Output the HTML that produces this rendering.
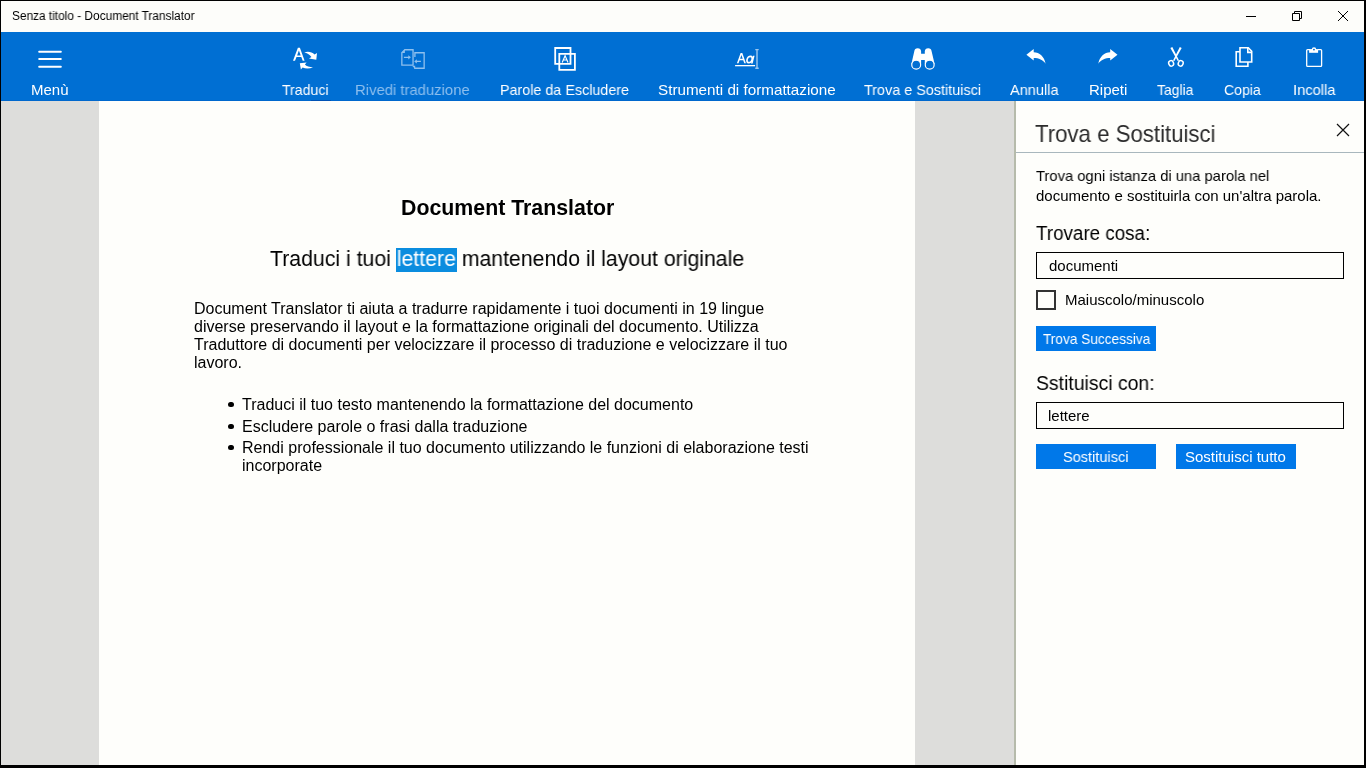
<!DOCTYPE html>
<html><head><meta charset="utf-8">
<style>
html,body{margin:0;padding:0;}
body{width:1366px;height:768px;overflow:hidden;background:#000;position:relative;font-family:"Liberation Sans",sans-serif;}
.a{position:absolute;}
.t{position:absolute;white-space:nowrap;line-height:1;transform-origin:0 0;will-change:transform;}
#title{left:1px;top:1px;width:1363px;height:31px;background:#fdfdfa;}
#tb{left:1px;top:32px;width:1363px;height:69px;background:#006fd3;}
#gl{left:1px;top:101px;width:98px;height:664px;background:#dddddb;}
#pg{left:99px;top:101px;width:816px;height:664px;background:#fefefb;}
#gr{left:915px;top:101px;width:99px;height:664px;background:#dddddb;}
#bd{left:1014px;top:101px;width:2px;height:664px;background:#b6bbab;}
#pn{left:1016px;top:101px;width:348px;height:664px;background:#fefefb;}
.lbl{color:#fff;font-size:15px;}
.dis{color:#8dbfee;}
.doc{color:#000;font-size:16px;}
.ui{color:#000;}
.btn{background:#0078e9;}
.fld{border:1px solid #000;box-sizing:border-box;background:#fefefb;}
</style></head><body>
<div id="title" class="a"></div>
<div class="t" style="left:12px;top:10px;font-size:12px;color:#000;transform:scaleX(0.988);">Senza titolo - Document Translator</div>
<!-- window buttons -->
<svg class="a" style="left:1236px;top:4px" width="120" height="24" viewBox="1236 4 120 24">
 <path d="M1246 16.5H1256" stroke="#000" stroke-width="1" fill="none"/>
 <path d="M1292.5 13.5h7v7h-7z M1294.5 13.5v-2h7v7h-2" stroke="#000" stroke-width="1" fill="none"/>
 <path d="M1338 11L1348 21M1348 11L1338 21" stroke="#000" stroke-width="1" fill="none"/>
</svg>

<div id="tb" class="a"></div>
<div class="a" style="left:1px;top:100px;width:1363px;height:1px;background:#0068cd;"></div>
<div class="a" style="left:311px;top:100px;width:20px;height:1px;background:#0052b4;"></div>
<div id="gl" class="a"></div>
<div id="pg" class="a"></div>
<div id="gr" class="a"></div>
<div id="bd" class="a"></div>
<div id="pn" class="a"></div>

<!-- toolbar labels -->
<div class="t lbl" style="left:31px;top:82.3px;">Menù</div>
<div class="t lbl" style="left:282px;top:82.3px;transform:scaleX(0.94);">Traduci</div>
<div class="t lbl dis" style="left:355px;top:82.3px;transform:scaleX(0.99);">Rivedi traduzione</div>
<div class="t lbl" style="left:500px;top:82.3px;transform:scaleX(0.955);">Parole da Escludere</div>
<div class="t lbl" style="left:658px;top:82.3px;transform:scaleX(1.015);">Strumenti di formattazione</div>
<div class="t lbl" style="left:864px;top:82.3px;transform:scaleX(0.959);">Trova e Sostituisci</div>
<div class="t lbl" style="left:1010px;top:82.3px;transform:scaleX(0.97);">Annulla</div>
<div class="t lbl" style="left:1089px;top:82.3px;">Ripeti</div>
<div class="t lbl" style="left:1157px;top:82.3px;transform:scaleX(0.93);">Taglia</div>
<div class="t lbl" style="left:1224px;top:82.3px;transform:scaleX(0.94);">Copia</div>
<div class="t lbl" style="left:1293px;top:82.3px;transform:scaleX(0.98);">Incolla</div>
<svg class="a" style="left:0;top:0" width="1366" height="101" viewBox="0 0 1366 101">
 <g fill="#fff">
  <!-- hamburger -->
  <rect x="38.2" y="50.75" width="23.6" height="1.9" rx="0.9"/>
  <rect x="38.2" y="58.05" width="23.6" height="1.9" rx="0.9"/>
  <rect x="38.2" y="65.8" width="23.6" height="1.9" rx="0.9"/>
 </g>
 <!-- translate -->
 <path fill="#fff" fill-rule="evenodd" d="M293 60.8 L297.9 47.8 H299.9 L304.6 60.8 H302.7 L301.3 56.9 H296.5 L295 60.8 Z M297.1 55.5 H300.7 L298.9 50.4 Z"/>
 <path fill="#fff" d="M304.2 52.5 C307.5 51 311.8 51.6 314.6 54.6 L317 52.9 L316.3 59.8 L309 58.6 L311.4 56.9 C309.6 54.6 307 53.1 304.2 52.5 Z"/>
 <path fill="#fff" d="M299.8 63.25 L306.6 62.4 L304.9 64.5 C306.5 66.3 309.5 67.2 313 67.3 C309.8 68.8 305.5 69 302.6 67.4 L300.9 69.5 Z"/>
 <!-- rivedi -->
 <g stroke="#8ec0ee" stroke-width="1.3" fill="none">
  <path d="M401.85 52.6 L404.8 49.75 H413.05 V65.05 H401.85 Z"/>
  <path d="M414.9 57 V52.75 H424.15 V68.25 H414.2"/>
  <path d="M403.9 57.3 H409.2 M420.9 61.4 H416"/>
 </g>
 <g fill="#8ec0ee">
  <path d="M401.5 52.9 L404.9 49.4 V52.9 Z"/>
  <path d="M408.3 55.2 L410.9 57.3 L408.3 59.4 Z"/>
  <path d="M416.8 59.3 L414.2 61.4 L416.8 63.5 Z"/>
  <path d="M412.1 65.7 H415.2 V68.9 Z"/>
 </g>
 <!-- parole -->
 <g stroke="#fff" stroke-width="1.8" fill="none">
  <path d="M555.2 48 H570.5 V63.9 H555.2 Z"/>
  <path d="M559.3 53.9 H574.9 V69.9 H559.3 Z"/>
 </g>
 <path d="M562.2 62.4 L565.1 55.8 L568 62.4 M563.2 60 H567" stroke="#fff" stroke-width="1.15" fill="none"/>
 <!-- strumenti -->
 <path fill="#fff" fill-rule="evenodd" d="M736.9 63.2 L740.6 53 H742.3 L745.9 63.2 H744.3 L743.2 60.2 H739.6 L738.5 63.2 Z M740.1 58.8 H742.7 L741.4 55 Z"/>
 <g transform="translate(749.6 59.6) skewX(-14)"><ellipse rx="2.55" ry="3.2" stroke="#fff" stroke-width="1.6" fill="none"/><path d="M3.2 -3.9 V4" stroke="#fff" stroke-width="1.6"/></g>
 <rect x="735.1" y="65" width="20" height="1.3" fill="#fff"/>
 <path d="M757 49.6 V68.2 M755.3 49.6 H758.7 M755.3 68.2 H758.7" stroke="#9cc8f0" stroke-width="1.4" fill="none"/>
 <!-- binoculars -->
 <path fill="#fff" d="M911.4 64 L914.3 51.2 Q914.6 48.2 917.7 48.2 Q920.8 48.2 921.1 51.2 V53.7 H924.8 V51.2 Q925.1 48.2 928.2 48.2 Q931.3 48.2 931.6 51.2 L934.6 64 H924.8 V60 H921.1 V64 Z"/>
 <circle cx="916.2" cy="64.7" r="4.45" fill="#006fd3" stroke="#fff" stroke-width="1.2"/>
 <circle cx="929.7" cy="64.7" r="4.45" fill="#006fd3" stroke="#fff" stroke-width="1.2"/>
 <!-- undo / redo -->
 <path fill="#fff" d="M1026.4 54.8 L1033.7 49.1 V52.3 C1039.5 52.5 1044.2 56.5 1045.6 63.7 C1043 59.8 1038.8 58 1033.7 58 V60.6 Z"/>
 <path fill="#fff" d="M1117.5 54.8 L1110.2 49.1 V52.3 C1104.4 52.5 1099.7 56.5 1098.3 63.7 C1100.9 59.8 1105.1 58 1110.2 58 V60.6 Z"/>
 <!-- scissors -->
 <path fill="#fff" d="M1170.4 47.9 L1172.3 47.1 L1179.1 60.6 L1177.7 61.1 Z"/><path fill="#fff" d="M1181.7 47.9 L1179.8 47.1 L1173 60.6 L1174.4 61.1 Z"/>
 <ellipse cx="1171.15" cy="63.4" rx="2.4" ry="2.8" transform="rotate(-25 1171.15 63.4)" fill="none" stroke="#fff" stroke-width="1.45"/>
 <ellipse cx="1180.7" cy="63.4" rx="2.4" ry="2.8" transform="rotate(25 1180.7 63.4)" fill="none" stroke="#fff" stroke-width="1.45"/>
 <!-- copy -->
 <g stroke="#fff" stroke-width="1.6" fill="none">
  <path d="M1240 51.7 H1236.2 V66.3 H1247.9 V62"/>
  <path d="M1240 47.75 H1248.3 L1251.7 51.3 V62 H1240 Z"/>
  <path d="M1247.8 48 V52.4 H1251.6"/>
 </g>
 <!-- paste -->
 <path d="M1310 49.7 H1307.6 Q1306.7 49.7 1306.7 50.6 V65.4 Q1306.7 66.3 1307.6 66.3 H1320.7 Q1321.6 66.3 1321.6 65.4 V50.6 Q1321.6 49.7 1320.7 49.7 H1318" stroke="#fff" stroke-width="1.3" fill="none"/>
 <rect x="1309.1" y="49.1" width="9" height="3.7" fill="#fff"/>
 <circle cx="1314" cy="49.5" r="2.25" fill="#fff"/>
 <circle cx="1313.95" cy="49.6" r="0.95" fill="#006fd3"/>
</svg>

<!-- document -->
<div class="t doc" style="left:401px;top:197.5px;font-size:21.33px;font-weight:bold;">Document Translator</div>
<div class="a" style="left:396px;top:248px;width:61px;height:24px;background:#0b8ddf;"></div>
<div class="t doc" style="left:270.3px;top:249.4px;font-size:21.33px;transform:scaleX(0.9965);">Traduci i tuoi <span style="color:#fff">lettere</span> mantenendo il layout originale</div>
<div class="t doc" style="left:194px;top:301.2px;">Document Translator ti aiuta a tradurre rapidamente i tuoi documenti in 19 lingue</div>
<div class="t doc" style="left:194px;top:319.2px;">diverse preservando il layout e la formattazione originali del documento. Utilizza</div>
<div class="t doc" style="left:194px;top:337.2px;">Traduttore di documenti per velocizzare il processo di traduzione e velocizzare il tuo</div>
<div class="t doc" style="left:194px;top:355.2px;">lavoro.</div>
<div class="a" style="left:228px;top:402px;width:5.7px;height:5.4px;border-radius:3px;background:#000;"></div>
<div class="a" style="left:228px;top:423.6px;width:5.7px;height:5.4px;border-radius:3px;background:#000;"></div>
<div class="a" style="left:228px;top:444.6px;width:5.7px;height:5.4px;border-radius:3px;background:#000;"></div>
<div class="t doc" style="left:242px;top:396.5px;">Traduci il tuo testo mantenendo la formattazione del documento</div>
<div class="t doc" style="left:242px;top:419px;">Escludere parole o frasi dalla traduzione</div>
<div class="t doc" style="left:242px;top:440px;">Rendi professionale il tuo documento utilizzando le funzioni di elaborazione testi</div>
<div class="t doc" style="left:242px;top:458px;">incorporate</div>

<!-- panel -->
<div class="t ui" style="left:1035px;top:122.2px;font-size:24px;transform:scaleX(0.925);color:#2b2b2b;">Trova e Sostituisci</div>
<svg class="a" style="left:1330px;top:118px" width="26" height="26" viewBox="1330 118 26 26">
 <path d="M1337 124L1349 136M1349 124L1337 136" stroke="#111" stroke-width="1.2" fill="none"/>
</svg>
<div class="a" style="left:1016px;top:152px;width:348px;height:1px;background:#a9b7bd;"></div>
<div class="t ui" style="left:1036px;top:168.3px;font-size:15px;transform:scaleX(0.984);">Trova ogni istanza di una parola nel</div>
<div class="t ui" style="left:1036px;top:188.3px;font-size:15px;">documento e sostituirla con un'altra parola.</div>
<div class="t ui" style="left:1036px;top:223.1px;font-size:20px;transform:scaleX(0.94);">Trovare cosa:</div>
<div class="a fld" style="left:1036px;top:252px;width:308px;height:27px;"></div>
<div class="t ui" style="left:1049px;top:258.3px;font-size:15px;">documenti</div>
<div class="a" style="left:1036px;top:290px;width:20px;height:20px;border:2px solid #333;box-sizing:border-box;"></div>
<div class="t ui" style="left:1064.5px;top:291.8px;font-size:15px;">Maiuscolo/minuscolo</div>
<div class="a btn" style="left:1036px;top:326px;width:120px;height:25px;"></div>
<div class="t" style="left:1043px;top:331.3px;font-size:15px;color:#fff;transform:scaleX(0.91);">Trova Successiva</div>
<div class="t ui" style="left:1036px;top:373.1px;font-size:20px;transform:scaleX(0.97);">Sstituisci con:</div>
<div class="a fld" style="left:1036px;top:402px;width:308px;height:27px;"></div>
<div class="t ui" style="left:1048px;top:408.3px;font-size:15px;">lettere</div>
<div class="a btn" style="left:1036px;top:444px;width:120px;height:25px;"></div>
<div class="t" style="left:1063px;top:449.3px;font-size:15px;color:#fff;transform:scaleX(0.97);">Sostituisci</div>
<div class="a btn" style="left:1176px;top:444px;width:120px;height:25px;"></div>
<div class="t" style="left:1185px;top:449.3px;font-size:15px;color:#fff;">Sostituisci tutto</div>

</body></html>
